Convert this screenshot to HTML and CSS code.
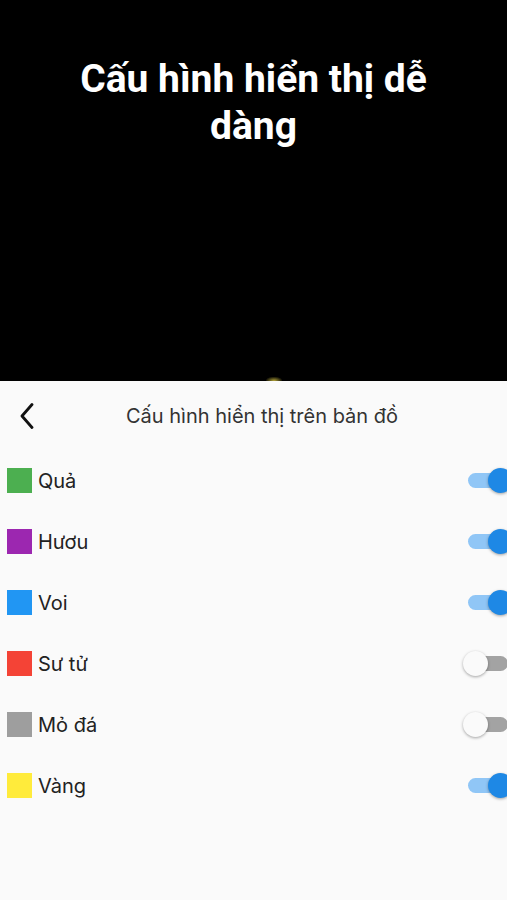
FILE: index.html
```html
<!doctype html>
<html lang="vi">
<head>
<meta charset="utf-8">
<title>Cấu hình hiển thị trên bản đồ</title>
<meta name="viewport" content="width=device-width, initial-scale=1">
<link rel="stylesheet" href="styles.css">
</head>
<body>

<div id="hero">
	<h1>Cấu hình hiển thị dễ<br>dàng</h1>
	<div class="glow"></div>
</div>

<div id="sheet">

	<div id="bar">
		<button class="back" aria-label="Quay lại">
			<svg width="14" height="26" viewBox="0 0 14 26">
				<path d="M12 1.5 L2 13 L12 24.5" fill="none" stroke="#111" stroke-width="2.8" stroke-linecap="round" stroke-linejoin="round"/>
			</svg>
		</button>
		<h2>Cấu hình hiển thị trên bản đồ</h2>
		<span class="pad"></span>
	</div>

	<div class="row">
		<span class="swatch green"></span>
		<span class="label">Quả</span>
		<div class="switch on"><span class="track"></span><span class="knob"></span></div>
	</div>

	<div class="row">
		<span class="swatch purple"></span>
		<span class="label">Hươu</span>
		<div class="switch on"><span class="track"></span><span class="knob"></span></div>
	</div>

	<div class="row">
		<span class="swatch blue"></span>
		<span class="label">Voi</span>
		<div class="switch on"><span class="track"></span><span class="knob"></span></div>
	</div>

	<div class="row">
		<span class="swatch red"></span>
		<span class="label">Sư tử</span>
		<div class="switch"><span class="track"></span><span class="knob"></span></div>
	</div>

	<div class="row">
		<span class="swatch grey"></span>
		<span class="label">Mỏ đá</span>
		<div class="switch"><span class="track"></span><span class="knob"></span></div>
	</div>

	<div class="row">
		<span class="swatch yellow"></span>
		<span class="label">Vàng</span>
		<div class="switch on"><span class="track"></span><span class="knob"></span></div>
	</div>

</div>

</body>
</html>
```

FILE: styles.css
```css
* { margin: 0; padding: 0; box-sizing: border-box; }
html, body { height: 100%; }

body {
	overflow: hidden;
	background: #fafafa;
	font-family: Inter, "Noto Sans", sans-serif;
}

#hero {
	height: 381px;
	background: #000;
	display: flex;
	flex-direction: column;
	padding-top: 56px;
}
#hero > h1 {
	font-family: Roboto, "Noto Sans", sans-serif;
	font-weight: bold;
	font-size: 39px;
	line-height: 47px;
	color: #fff;
	text-align: center;
}
.glow {
	width: 16px; height: 4px;
	margin: auto 0 0 266px;
	border-radius: 8px 8px 0 0;
	background: radial-gradient(ellipse at bottom, #b9a93a, rgba(0,0,0,0) 80%);
}

#sheet {
	background: #fafafa;
}

#bar {
	height: 69px;
	display: flex;
	align-items: center;
}
#bar > .back {
	width: 54px; height: 69px;
	border: none;
	background: none;
	display: flex;
	align-items: center;
	padding-left: 20px;
}
#bar > h2 {
	flex: 1;
	text-align: center;
	font-weight: normal;
	font-size: 20px;
	color: #333;
}
#bar > .pad { width: 37px; }

.row {
	height: 61px;
	display: flex;
	align-items: center;
	padding-left: 7px;
}
.swatch {
	width: 25px; height: 25px;
	margin-right: 6px;
}
.green { background: #4caf50; }
.purple { background: #9c27b0; }
.blue { background: #2196f3; }
.red { background: #f44336; }
.grey { background: #9e9e9e; }
.yellow { background: #ffeb3b; }

.label {
	flex: 1;
	font-size: 20px;
	color: #222;
}

.switch {
	display: grid;
	width: 50px; height: 25px;
	margin-right: -6px;
}
.switch > .track, .switch > .knob { grid-area: 1 / 1; }
.switch > .track {
	align-self: center;
	height: 15px;
	margin: 0 5px;
	border-radius: 8px;
	background: #a3a3a3;
}
.switch > .knob {
	width: 25px; height: 25px;
	border-radius: 50%;
	background: #fafafa;
	box-shadow: 0 1px 3px rgba(0,0,0,0.35);
	justify-self: start;
}
.switch.on > .track { background: #90c6f6; }
.switch.on > .knob {
	background: #1e88e5;
	justify-self: end;
}
```
